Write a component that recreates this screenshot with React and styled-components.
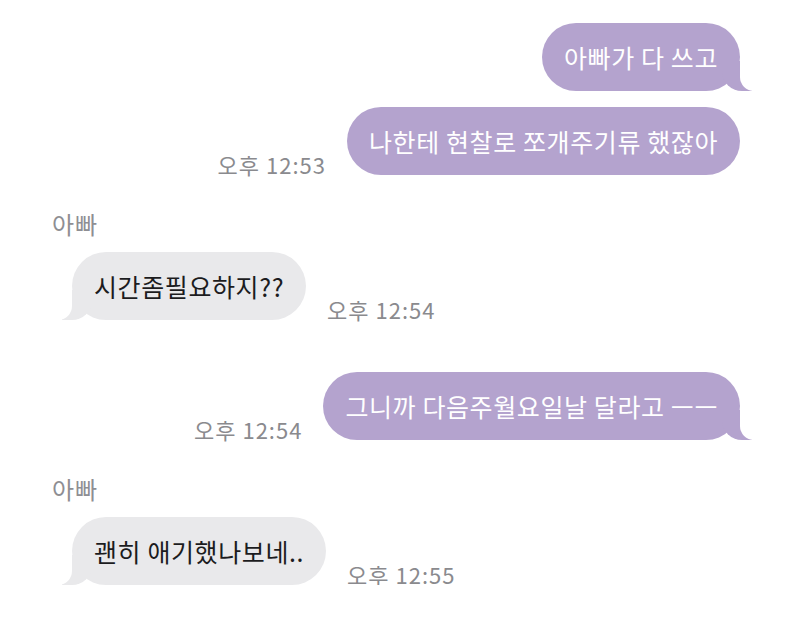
import React from "react";
import styled, { createGlobalStyle, css } from "styled-components";

const GlobalStyle = createGlobalStyle`
  body {
    margin: 0;
    background: #ffffff;
    font-family: "Noto Sans CJK KR", "Noto Sans", sans-serif;
  }
`;

const OUT = "#b4a3ce";
const IN = "#e9e9eb";

const groups = [
  {
    side: "out",
    top: 0,
    items: [
      { text: "아빠가 다 쓰고", tail: true },
      { text: "나한테 현찰로 쪼개주기류 했잖아", time: "오후 12:53" },
    ],
  },
  {
    side: "in",
    sender: "아빠",
    top: 33,
    items: [{ text: "시간좀필요하지??", time: "오후 12:54", tail: true }],
  },
  {
    side: "out",
    top: 52,
    items: [{ text: "그니까 다음주월요일날 달라고 ㅡㅡ", time: "오후 12:54", tail: true }],
  },
  {
    side: "in",
    sender: "아빠",
    top: 33,
    items: [{ text: "괜히 애기했나보네..", time: "오후 12:55", tail: true }],
  },
];

export default function App() {
  return (
    <>
      <GlobalStyle />
      <Thread>
        {groups.map((group, gi) => (
          <Group key={gi} $top={group.top}>
            {group.sender && <Sender>{group.sender}</Sender>}
            <Stack>
              {group.items.map((msg, i) => (
                <Row key={i} $side={group.side}>
                  {group.side === "out" && msg.time && <Time>{msg.time}</Time>}
                  <Bubble $side={group.side} $tail={msg.tail}>
                    {msg.text}
                  </Bubble>
                  {group.side === "in" && msg.time && <Time>{msg.time}</Time>}
                </Row>
              ))}
            </Stack>
          </Group>
        ))}
      </Thread>
    </>
  );
}

const Thread = styled.div`
  display: flex;
  flex-direction: column;
  padding: 23px 45px 0 52px;
`;

const Group = styled.div`
  display: flex;
  flex-direction: column;
  margin-top: ${(p) => p.$top}px;
`;

const Sender = styled.div`
  font-size: 24px;
  line-height: 32px;
  letter-spacing: 1px;
  color: #8e8e93;
  margin-bottom: 12px;
`;

const Stack = styled.div`
  display: flex;
  flex-direction: column;
  gap: 16px;
`;

const Row = styled.div`
  display: flex;
  align-items: flex-end;
  gap: 21px;
  justify-content: ${(p) => (p.$side === "out" ? "flex-end" : "flex-start")};
  padding-left: ${(p) => (p.$side === "in" ? "20px" : "0")};
`;

const Time = styled.span`
  font-size: 22px;
  line-height: 1;
  letter-spacing: 1px;
  color: #8a8a8e;
  white-space: nowrap;
`;

const tailOut = css`
  &::before {
    content: "";
    position: absolute;
    bottom: 0;
    right: -12px;
    width: 30px;
    height: 30px;
    background: ${OUT};
    border-bottom-left-radius: 20px;
  }
  &::after {
    content: "";
    position: absolute;
    bottom: 0;
    right: -18px;
    width: 18px;
    height: 30px;
    background: #ffffff;
    border-bottom-left-radius: 14px;
  }
`;

const tailIn = css`
  &::before {
    content: "";
    position: absolute;
    bottom: 0;
    left: -10px;
    width: 30px;
    height: 30px;
    background: ${IN};
    border-bottom-right-radius: 20px;
  }
  &::after {
    content: "";
    position: absolute;
    bottom: 0;
    left: -18px;
    width: 18px;
    height: 30px;
    background: #ffffff;
    border-bottom-right-radius: 14px;
  }
`;

const Bubble = styled.div`
  position: relative;
  z-index: 0;
  padding: 18px 22px;
  border-radius: 34px;
  font-size: 25px;
  line-height: 32px;
  letter-spacing: 0.6px;
  white-space: nowrap;
  background: ${(p) => (p.$side === "out" ? OUT : IN)};
  color: ${(p) => (p.$side === "out" ? "#ffffff" : "#1c1c1e")};

  &::before,
  &::after {
    z-index: -1;
  }

  ${(p) => p.$tail && (p.$side === "out" ? tailOut : tailIn)}
`;
